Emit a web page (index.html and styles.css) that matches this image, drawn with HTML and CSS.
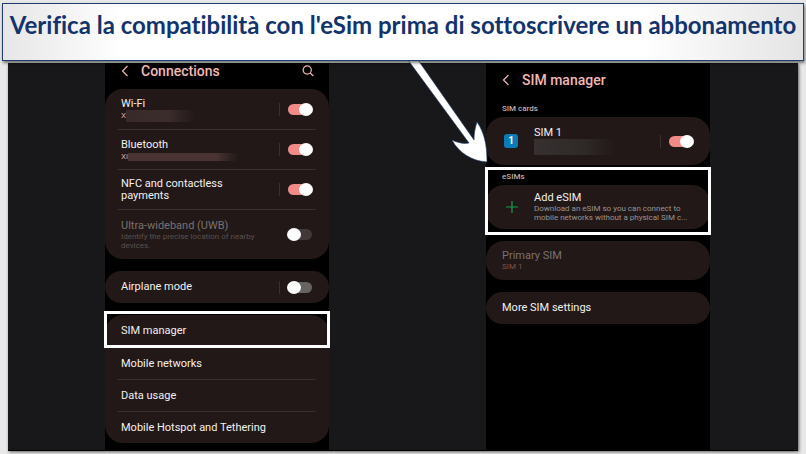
FILE: index.html
```html
<!DOCTYPE html>
<html lang="it">
<head>
  <meta charset="UTF-8" />
  <meta name="viewport" content="width=device-width, initial-scale=1.0" />
  <title>Verifica la compatibilità con l'eSim</title>
  <link rel="stylesheet" href="styles.css">
</head>
<body>

  <h1 class="banner">Verifica la compatibilità con l'eSim prima di sottoscrivere un abbonamento</h1>

  <main class="stage">

    <!-- Connections -->
    <section class="phone connections" lang="en">
      <header class="bar">
        <button class="icon-btn" aria-label="Back">
          <svg width="8" height="12" viewBox="0 0 8 12"><path d="M6.5 1 1.5 6l5 5" /></svg>
        </button>
        <h2>Connections</h2>
        <button class="icon-btn search" aria-label="Search">
          <svg width="12" height="12" viewBox="0 0 12 12"><circle cx="5.2" cy="5" r="4.1" /><path d="m8.2 8 3.1 3" /></svg>
        </button>
      </header>

      <div class="card">
        <div class="row tall">
          <div class="text">
            <label for="wifi">Wi-Fi</label>
            <p class="sub pink">X<span class="smudge wifi"></span></p>
          </div>
          <input class="toggle" type="checkbox" id="wifi" checked>
        </div>
        <div class="row tall">
          <div class="text">
            <label for="bt">Bluetooth</label>
            <p class="sub pink">Xi<span class="smudge bt"></span></p>
          </div>
          <input class="toggle" type="checkbox" id="bt" checked>
        </div>
        <div class="row tall">
          <div class="text">
            <label for="nfc">NFC and contactless<br>payments</label>
          </div>
          <input class="toggle" type="checkbox" id="nfc" checked>
        </div>
        <div class="row taller off">
          <div class="text">
            <label for="uwb">Ultra-wideband (UWB)</label>
            <p class="sub">Identify the precise location of nearby<br>devices.</p>
          </div>
          <input class="toggle" type="checkbox" id="uwb" disabled>
        </div>
      </div>

      <div class="card">
        <div class="row">
          <div class="text"><label for="airplane">Airplane mode</label></div>
          <input class="toggle" type="checkbox" id="airplane">
        </div>
      </div>

      <div class="card links">
        <div class="row marked"><a href="#sim">SIM manager</a></div>
        <div class="row"><a href="#networks">Mobile networks</a></div>
        <div class="row"><a href="#data">Data usage</a></div>
        <div class="row"><a href="#hotspot">Mobile Hotspot and Tethering</a></div>
      </div>
    </section>

    <!-- SIM manager -->
    <section class="phone manager" id="sim" lang="en">
      <svg class="arrow" width="94" height="108" viewBox="0 0 94 108">
        <path d="M8 0H18L74 80C74 74 75 68 77 62C84 72 87 84 87 102C72 101 59 93 52 80C58 83 64 84 69 83Z" />
      </svg>

      <header class="bar">
        <button class="icon-btn" aria-label="Back">
          <svg width="8" height="12" viewBox="0 0 8 12"><path d="M6.5 1 1.5 6l5 5" /></svg>
        </button>
        <h2>SIM manager</h2>
      </header>

      <h3>SIM cards</h3>
      <div class="card sims">
        <div class="row sim">
          <span class="chip">1</span>
          <div class="text">
            <label for="sim1">SIM 1</label>
            <p class="sub"><span class="smudge simname"></span></p>
          </div>
          <input class="toggle" type="checkbox" id="sim1" checked>
        </div>
      </div>

      <div class="esims">
        <h3>eSIMs</h3>
        <div class="card">
          <div class="row add">
            <svg class="plus" width="12" height="12" viewBox="0 0 12 12"><path d="M6 0v12M0 6h12" /></svg>
            <div class="text">
              <a href="#add">Add eSIM</a>
              <p class="sub">Download an eSIM so you can connect to<br>mobile networks without a physical SIM c...</p>
            </div>
          </div>
        </div>
      </div>

      <div class="card">
        <div class="row primary off">
          <div class="text">
            <span>Primary SIM</span>
            <p class="sub rose">SIM 1</p>
          </div>
        </div>
      </div>

      <div class="card">
        <div class="row"><a href="#more">More SIM settings</a></div>
      </div>
    </section>

  </main>

</body>
</html>
```
FILE: styles.css
```css
* { box-sizing: border-box; }
body { margin: 0; padding: 3px 2px; background: #e8e8e8; color: #f4f0ef; font-family: Roboto, sans-serif; font-size: 11px; line-height: 12px; }
h1, h2, h3, p { margin: 0; font-weight: 500; }
a { color: inherit; text-decoration: none; }

.banner {
  position: relative;
  z-index: 2;
  padding: 5px 0 19px;
  border: 1px solid #1f3d70;
  background: linear-gradient(90deg, #e6e6e6, #fff 15%, #fff 80%, #e4e4e4);
  box-shadow: 1px 2px 3px rgba(0, 0, 0, 0.5);
  color: #12336b;
  font: 700 24px/32px Lato, sans-serif;
  font-variant-ligatures: none;
  text-align: center;
  white-space: nowrap;
}

.stage {
  display: grid;
  grid-template-columns: 97fr 224fr 157fr 224fr 88fr;
  margin: 2px 6px 0;
  border-bottom: 1px solid #000;
  background: #18181a;
  box-shadow: 1px 1px 3px rgba(0, 0, 0, 0.6);
}

.phone { position: relative; background: #000; padding-bottom: 7px; }
.connections { grid-column: 2; }
.manager { grid-column: 4; }

.bar { display: flex; align-items: center; gap: 12px; height: 16px; padding: 0 15px 0 16px; margin-bottom: 10px; color: #f2b8b5; }
.bar h2 { flex: 1; font-size: 14px; line-height: 16px; }
.manager .bar { margin: 9px 0 15px; }
.icon-btn { display: flex; padding: 0; border: 0; background: none; color: inherit; }
.icon-btn svg { fill: none; stroke: currentColor; stroke-width: 1.2; }

h3 { padding-left: 16px; color: #c3aeac; font-size: 8px; line-height: 12px; margin-bottom: 2px; }

.card { padding: 0 13px; margin-bottom: 12px; border-radius: 18px; background: #211817; }
.row { display: flex; align-items: center; height: 32px; padding: 0 3px; }
.row + .row { border-top: 1px solid #3b302f; }
.tall { height: 40px; }
.taller { height: 50px; }
.text { flex: 1; }
.text label, .text a, .text span { display: block; }
.sub { color: #9d9492; font-size: 8px; line-height: 9px; font-weight: 400; }
.pink { display: flex; height: 10px; color: #e0a09c; line-height: 12px; }
.off { color: #7a716f; }
.off .sub { color: #5a504e; }
.off .rose { color: #80524f; }

/* blurred names */
.smudge { height: 12px; background: linear-gradient(90deg, #382a29, #3b2d2c 60%, #211817); }
.wifi { width: 70px; }
.bt { width: 110px; height: 8px; margin-top: 2px; background: linear-gradient(90deg, #493433, #493433 80%, #211817); }
.simname { width: 82px; height: 16px; background: linear-gradient(90deg, #363130, #2f2928 60%, #211817); }

.toggle {
  appearance: none;
  position: relative;
  width: 24px;
  height: 11px;
  margin: 0 1px 0 0;
  border-radius: 6px;
  background: #666361;
}
.toggle::before { content: ""; position: absolute; top: -1px; left: -1px; width: 14px; height: 13px; border-radius: 50%; background: #fff; }
.toggle::after { content: ""; position: absolute; top: -1px; left: -9px; width: 1px; height: 13px; background: #3b302f; }
.toggle:checked { background: #f28b85; }
.toggle:checked::before { left: 11px; }
.toggle:disabled { background: #403937; }
.toggle:disabled::after { display: none; }

.links { margin-bottom: 0; }
.marked { position: relative; }
.marked::after { content: ""; position: absolute; inset: -4px -14px -1px; border: 3px solid #fff; }

.sims { margin-bottom: 6px; }
.sim { height: 48px; }
.chip { width: 14px; height: 14px; margin: 0 16px 0 2px; border-radius: 3px; background: #0b7bb8; color: #fff; font-size: 10px; line-height: 14px; font-weight: 700; text-align: center; }

.esims { position: relative; }
.esims::after { content: ""; position: absolute; inset: -4px -1px -6px; border: 3px solid #fff; }
.add { height: 44px; }
.plus { flex: none; margin: 0 16px 0 4px; stroke: #12a150; stroke-width: 1.2; }
.add .sub { white-space: nowrap; }
.primary { height: 39px; }

.arrow { position: absolute; top: -3px; left: -86px; z-index: 1; fill: #fff; stroke: #1f3d70; stroke-width: 0.6; }
```
